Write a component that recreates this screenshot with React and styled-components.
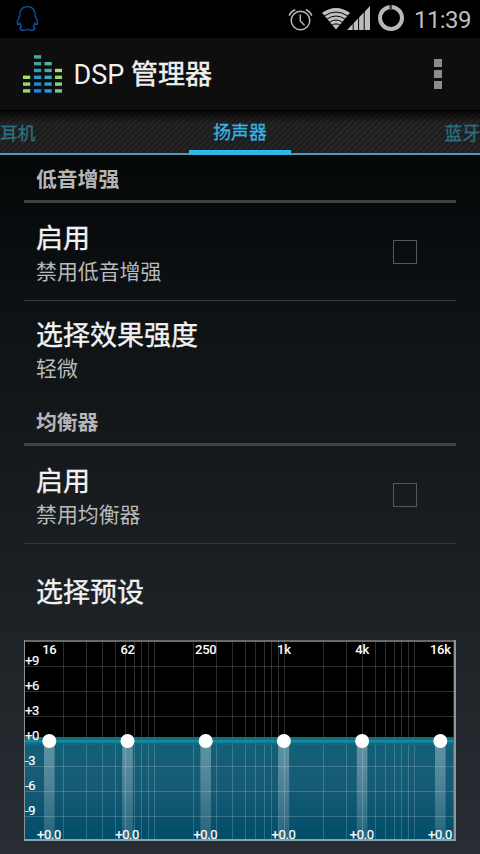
import React from 'react';
import styled, { createGlobalStyle } from 'styled-components';

const Global = createGlobalStyle`
  body { margin: 0; background: #000; }
  * { box-sizing: border-box; }
`;
const Screen = styled.main`
  width: 480px; height: 854px; overflow: hidden;
  display: flex; flex-direction: column;
  font-family: Roboto, "Noto Sans CJK SC", sans-serif;
  color: #f3f3f3;
  background: linear-gradient(#000 38px, #050708 160px, #0d1113 300px, #15191c 450px, #1e2327 640px, #282e34 854px);
`;
const StatusBar = styled.header`
  height: 38px; flex: none; background: #000;
  display: flex; align-items: center; justify-content: space-between;
`;
const StatusIcons = styled.svg`display: block; flex: none;`;
const Clock = styled.time`
  width: 66px; flex: none; font-size: 24px; line-height: 38px; letter-spacing: -.6px;
  color: #bebebe; padding: 1px 0 0; white-space: nowrap;
`;
const Spacer = styled.div`flex: 1;`;
const ActionBar = styled.header`
  height: 72px; flex: none; background: #0e0e0e;
  display: flex; align-items: center; padding: 0 38px 0 23px;
`;
const Title = styled.h1`
  flex: 1; margin: 0 0 0 11.5px; font-size: 27px; line-height: 40px; font-weight: 400; color: #f0f0f0;
  padding-top: 1px;
`;
const TitleWord = styled.span`-webkit-text-stroke: .5px currentColor;`;
const Overflow = styled.button`
  display: grid; gap: 3px; padding: 0; border: 0; background: none;
`;
const Dot = styled.span`width: 8px; height: 8px; background: #8c8c8c;`;
const Tabs = styled.nav`
  height: 45px; flex: none; display: grid; grid-template-columns: 189px 102px 189px;
  border-top: 1px solid #000;
  background:
    linear-gradient(#000000cc, #00000000 12px),
    repeating-linear-gradient(135deg, #272727 0 2.1px, #1d1d1d 2.1px 4.243px);
`;
const Tab = styled.button`
  border: 0; background: none; height: 44px;
  padding: ${p => (p.$active ? '4px 0 0' : '3px 0 0')};
  font: 400 17.8px/36px Roboto, "Noto Sans CJK SC", sans-serif;
  -webkit-text-stroke: .3px currentColor;
  text-align: ${p => p.$align || 'center'};
  color: ${p => (p.$active ? '#33b5e5' : '#2b7082')};
  border-bottom: ${p => (p.$active ? '5px solid #33b5e5' : '2px solid #5299b9')};
`;
const Content = styled.section`padding: 0 24px;`;
const SectionTitle = styled.h2`
  margin: 0; height: 48px; padding: 5px 12px 0; border-bottom: 3px solid #404242;
  font-size: 20.8px; line-height: 40px; font-weight: 700; color: #b6b6b6;
`;
const Row = styled.div`
  height: ${p => p.$height || 97}px; padding: ${p => p.$top ?? 3}px 39px 0 12px;
  display: flex; align-items: center; justify-content: space-between;
`;
const Divider = styled.hr`margin: 0; height: 1px; border: 0; background: #35393b;`;
const RowTitle = styled.div`
  font-size: 27px; line-height: 36px; font-weight: 400; color: #f3f3f3;
  -webkit-text-stroke: .35px currentColor;
`;
const Summary = styled.div`font-size: 20.9px; line-height: 30px; color: #b9bbbb;`;
const Check = styled.span`
  width: 24px; height: 24px; margin-bottom: 4px; border: 1px solid #55585a;
`;
const Chart = styled.svg`display: block;`;

const Equalizer = () => {
  const cols = [[23, 3], [34, 6], [44.5, 5], [55, 4]];
  const colors = [
    ['#94d970', '#9cd96b', '#a7de6b'],
    ['#0f8cf0', '#188ddd', '#269acb', '#359fb7', '#40a5a3', '#4aab91'],
    ['#1da0e2', '#2a9fd0', '#3fa6c0', '#48abad', '#52b39c'],
    ['#76ca85', '#87d07d', '#96d77a', '#a5df76'],
  ];
  return (
    <svg width="39" height="38" viewBox="23 55 39 38" aria-hidden="true">
      {cols.map(([x, n], c) => Array.from({ length: n }, (_, i) => (
        <rect key={`${c}-${i}`} x={x} y={89.2 - i * 6.8} width="7.2" height="3.4" fill={colors[c][i]} />
      )))}
    </svg>
  );
};

const gridX = hz => 260.5 + 130 * Math.log10(hz / 1000);
const decades = [10, 100, 1000, 10000];
const freqs = decades.flatMap(d => [1, 2, 3, 4, 5, 6, 7, 8, 9].map(n => n * d)).filter(f => f >= 20 && f <= 20000);
const bands = ['16', '62', '250', '1k', '4k', '16k'];
const levels = ['+9', '+6', '+3', '+0', '-3', '-6', '-9'];

const EqChart = () => (
  <Chart width="432" height="201" viewBox="0 0 432 201">
    <defs>
      <linearGradient id="fill" x1="0" y1="0" x2="0" y2="1">
        <stop offset="0" stopColor="#126078" />
        <stop offset=".45" stopColor="#175b75" />
        <stop offset="1" stopColor="#004d69" />
      </linearGradient>
      <linearGradient id="glow" x1="0" y1="0" x2="0" y2="1">
        <stop offset="0" stopColor="#087184" />
        <stop offset=".32" stopColor="#0b7488" />
        <stop offset=".52" stopColor="#2297a9" />
        <stop offset=".72" stopColor="#0b7488" />
        <stop offset="1" stopColor="#106a7e" />
      </linearGradient>
      <linearGradient id="bar" x1="0" y1="0" x2="0" y2="1">
        <stop offset="0" stopColor="#fff" stopOpacity=".33" />
        <stop offset="1" stopColor="#fff" stopOpacity=".13" />
      </linearGradient>
    </defs>
    <rect width="432" height="201" fill="#000" />
    <rect y="97" width="432" height="103" fill="url(#fill)" />
    <g stroke="#fff" strokeOpacity=".18">
      {freqs.map(f => <path key={f} d={`M${Math.floor(gridX(f)) + 0.5} 1V200`} />)}
      {levels.map((l, i) => l !== '+0' && <path key={l} d={`M1 ${26.5 + i * 25}H430`} />)}
    </g>
    <rect y="97" width="432" height="8" fill="url(#glow)" fillOpacity=".9" />
    <path d="M0 1H432" stroke="#8b8e90" strokeWidth="1.4" />
    <path d="M.5 0V201" stroke="#8b9194" />
    <path d="M431 0V201" stroke="#8b979c" strokeWidth="2" />
    <path d="M0 200H432" stroke="#83a3ae" strokeWidth="2" />
    <g fontFamily="Roboto, sans-serif" fontSize="13" fontWeight="400" fill="#fff">
      {levels.map((l, i) => (
        <text key={l} x="1" y={25 + i * 25} letterSpacing="-.3" stroke="#fff" strokeWidth=".2">{l}</text>
      ))}
      {bands.map((b, i) => {
        const x = 25.3 + i * 78.2;
        return (
          <g key={b} textAnchor="middle">
            <rect x={x - 5.3} y="101" width="10.6" height="98" fill="url(#bar)" />
            <circle cx={x} cy="101" r="7" />
            <text x={x} y="14" letterSpacing="-.3" fontWeight="500">{b}</text>
            <text x={x - 0.4} y="198.5" letterSpacing="-.4" stroke="#fff" strokeWidth=".2">+0.0</text>
          </g>
        );
      })}
    </g>
  </Chart>
);

const Preference = ({ title, summary, checkbox, height, top }) => (
  <Row $height={height} $top={top}>
    <div>
      <RowTitle>{title}</RowTitle>
      {summary && <Summary>{summary}</Summary>}
    </div>
    {checkbox && <Check role="checkbox" aria-checked="false" />}
  </Row>
);

export default function App() {
  return (
    <Screen>
      <Global />
      <StatusBar>
        <StatusIcons width="60" height="38" viewBox="0 0 60 38">
          <path d="M27.4 6.6c-5.8 0-8.2 4.4-7.6 9.6-1.8 3-2.9 5.6-2.3 8.2l1 .2 1.4-1.2 1.5 3.2-1.5 2.1c.4 1.9 5.4 2.1 7.5.6 2.1 1.5 7.1 1.3 7.5-.6l-1.5-2.1 1.5-3.2 1.4 1.2 1-.2c.6-2.6-.5-5.2-2.3-8.2.6-5.2-1.8-9.6-7.6-9.6Z" fill="none" stroke="#0754a0" strokeWidth="1.4" />
        </StatusIcons>
        <Spacer />
        <StatusIcons width="126" height="38" viewBox="288 0 126 38">
          <g fill="none" stroke="#b8b8b8">
            <circle cx="300.5" cy="20.5" r="9.3" strokeWidth="1.5" />
            <path d="M300.3 14.5v6.5l4.2 4.3" strokeWidth="1.4" />
            <path d="M289.3 15.7q1.3-4.3 6-6M311.7 15.7q-1.3-4.3-6-6" strokeWidth="1.6" />
            <circle cx="391" cy="18" r="11" strokeWidth="4" />
          </g>
          <path d="M389.4 5h2.6v5h-2.6z" fill="#444" />
          <path d="M322 12.8Q336 3.2 350 12.8L336 29.5Z" fill="#bebebe" />
          <g fill="none" stroke="#000" strokeWidth="1">
            <path d="M324 16.2q12-8.4 24 0M326.5 19.4q9.5-6.8 19 0M329 22.5q7-5 14 0M331.5 25.5q4.5-3.3 9 0" />
          </g>
          <path d="M347 30 370 6V30Z" fill="#bebebe" />
          <path d="M353.2 18V30M358.6 12V30M364.2 7V30" stroke="#000" strokeWidth="1" />
        </StatusIcons>
        <Clock>11:39</Clock>
      </StatusBar>
      <ActionBar>
        <Equalizer />
        <Title>DSP <TitleWord>管理器</TitleWord></Title>
        <Overflow aria-label="更多选项"><Dot /><Dot /><Dot /></Overflow>
      </ActionBar>
      <Tabs>
        <Tab $align="left">耳机</Tab>
        <Tab $active>扬声器</Tab>
        <Tab $align="right">蓝牙</Tab>
      </Tabs>
      <Content>
        <SectionTitle>低音增强</SectionTitle>
        <Preference title="启用" summary="禁用低音增强" checkbox top={5} />
        <Divider />
        <Preference title="选择效果强度" summary="轻微" />
        <SectionTitle>均衡器</SectionTitle>
        <Preference title="启用" summary="禁用均衡器" checkbox top={5} />
        <Divider />
        <Preference title="选择预设" height={96} top={1} />
        <EqChart />
      </Content>
    </Screen>
  );
}
